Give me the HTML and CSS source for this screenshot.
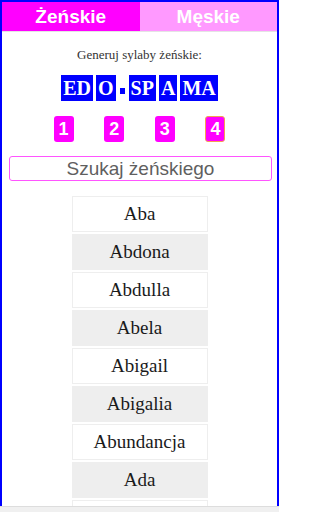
FILE: index.html
```html
<!DOCTYPE html>
<html lang="pl">
<head>
<meta charset="utf-8">
<meta name="viewport" content="width=279">
<title>Imiona</title>
<link rel="stylesheet" href="styles.css">
</head>
<body>
<div class="page">
  <div class="frame">
    <div class="tabs">
      <div class="tab tab-active">Żeńskie</div>
      <div class="tab tab-inactive">Męskie</div>
    </div>
    <div class="label">Generuj sylaby żeńskie:</div>
    <div class="syllables">
      <span class="syl">ED</span>
      <span class="syl">O</span>
      <span class="dash"></span>
      <span class="syl">SP</span>
      <span class="syl">A</span>
      <span class="syl">MA</span>
    </div>
    <div class="numbers">
      <span class="num">1</span>
      <span class="num">2</span>
      <span class="num">3</span>
      <span class="num num-selected">4</span>
    </div>
    <div class="search-wrap">
      <input class="search" type="text" placeholder="Szukaj żeńskiego">
    </div>
    <div class="list">
      <div class="item">Aba</div>
      <div class="item item-alt">Abdona</div>
      <div class="item">Abdulla</div>
      <div class="item item-alt">Abela</div>
      <div class="item">Abigail</div>
      <div class="item item-alt">Abigalia</div>
      <div class="item">Abundancja</div>
      <div class="item item-alt">Ada</div>
      <div class="item">Adalberta</div>
    </div>
  </div>
  <div class="footer"></div>
</div>
</body>
</html>
```
FILE: styles.css
```css
html, body {
  margin: 0;
  padding: 0;
  height: 512px;
  overflow: hidden;
  background: #ffffff;
}
.page {
  width: 279px;
  height: 512px;
  overflow: hidden;
}
.frame {
  box-sizing: border-box;
  height: 506px;
  border: 2px solid #0000ff;
  border-bottom: none;
  overflow: hidden;
  background: #ffffff;
}
.tabs {
  display: flex;
  height: 29px;
  border-bottom: 1px solid #e4e4e4;
}
.tab {
  flex: 1;
  display: flex;
  align-items: center;
  justify-content: center;
  color: #ffffff;
  font-family: "Liberation Sans", Arial, sans-serif;
  font-weight: bold;
  font-size: 19px;
}
.tab-active { background: #ff00ff; }
.tab-inactive { background: #ff99ff; }
.label {
  margin-top: 15px;
  text-align: center;
  font-family: "Liberation Serif", "Times New Roman", serif;
  font-size: 13px;
  line-height: 16px;
  color: #333333;
}
.syllables {
  margin-top: 12px;
  display: flex;
  justify-content: center;
  gap: 3px;
  height: 26px;
}
.syl {
  background: #0000ff;
  color: #ffffff;
  font-family: "Liberation Serif", "Times New Roman", serif;
  font-weight: bold;
  font-size: 20px;
  line-height: 26px;
  padding: 0 2px;
}
.dash {
  align-self: flex-end;
  width: 5px;
  height: 6px;
  margin: 0 1px 7px 1px;
  background: #0000ff;
}
.numbers {
  margin-top: 15px;
  display: grid;
  grid-template-columns: repeat(4, 50.67px);
  justify-content: center;
  justify-items: center;
}
.num {
  box-sizing: border-box;
  width: 20px;
  height: 26px;
  border-radius: 3px;
  background: #ff00ff;
  color: #ffffff;
  font-family: "Liberation Sans", Arial, sans-serif;
  font-weight: bold;
  font-size: 18px;
  line-height: 26px;
  text-align: center;
}
.num-selected {
  border: 1px solid #f4a050;
  line-height: 24px;
}
.search-wrap {
  margin-top: 14px;
  padding: 0 5px 0 7px;
}
.search {
  box-sizing: border-box;
  display: block;
  width: 100%;
  height: 25px;
  border: 1px solid #ff55ff;
  border-radius: 3px;
  padding: 0;
  text-align: center;
  font-family: "Liberation Sans", Arial, sans-serif;
  font-size: 19px;
  color: #555555;
  outline: none;
  background: #ffffff;
}
.search::placeholder {
  color: #5f5f5f;
  opacity: 1;
}
.list {
  margin-top: 15px;
  display: flex;
  flex-direction: column;
  align-items: center;
  gap: 2px;
}
.item {
  box-sizing: border-box;
  width: 136px;
  height: 36px;
  border: 1px solid #eeeeee;
  display: flex;
  align-items: center;
  justify-content: center;
  font-family: "Liberation Serif", "Times New Roman", serif;
  font-size: 19px;
  color: #1a1a1a;
  background: #ffffff;
  flex-shrink: 0;
}
.item-alt {
  background: #eeeeee;
}
.footer {
  height: 5px;
  border-top: 1px solid #dddddd;
  background: #f0f0f0;
}
```
